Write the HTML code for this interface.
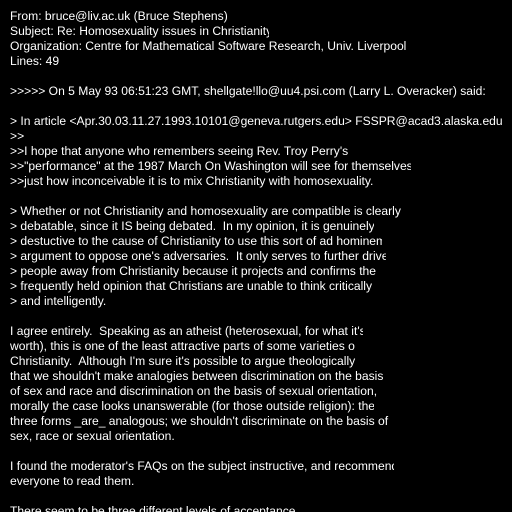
<!DOCTYPE html>
<html><head><meta charset="utf-8"><style>
html,body{margin:0;padding:0;background:#000;width:512px;height:512px;overflow:hidden}
body{font-family:"Liberation Sans",sans-serif;font-size:12.1px;line-height:15px;color:#fff;padding-top:9px;box-sizing:border-box}
div{margin-left:10px;white-space:pre;overflow:hidden;height:15px}
.b{height:15px}
</style></head><body>
<div>From: bruce@liv.ac.uk (Bruce Stephens)</div>
<div style="width:259px">Subject: Re: Homosexuality issues in Christianity</div>
<div>Organization: Centre for Mathematical Software Research, Univ. Liverpool</div>
<div>Lines: 49</div>
<div class="b"></div>
<div>&gt;&gt;&gt;&gt;&gt; On 5 May 93 06:51:23 GMT, shellgate!llo@uu4.psi.com (Larry L. Overacker) said:</div>
<div class="b"></div>
<div>&gt; In article &lt;Apr.30.03.11.27.1993.10101@geneva.rutgers.edu&gt; FSSPR@acad3.alaska.edu</div>
<div>&gt;&gt;</div>
<div style="width:401px">&gt;&gt;I hope that anyone who remembers seeing Rev. Troy Perry's</div>
<div style="width:401px">&gt;&gt;"performance" at the 1987 March On Washington will see for themselves</div>
<div style="width:401px">&gt;&gt;just how inconceivable it is to mix Christianity with homosexuality.</div>
<div class="b"></div>
<div style="width:393px">&gt; Whether or not Christianity and homosexuality are compatible is clearly</div>
<div style="width:364px">&gt; debatable, since it IS being debated.  In my opinion, it is genuinely</div>
<div style="width:372px">&gt; destuctive to the cause of Christianity to use this sort of ad hominem</div>
<div style="width:376px">&gt; argument to oppose one's adversaries.  It only serves to further drive</div>
<div style="width:366px">&gt; people away from Christianity because it projects and confirms the</div>
<div style="width:370px">&gt; frequently held opinion that Christians are unable to think critically</div>
<div>&gt; and intelligently.</div>
<div class="b"></div>
<div style="width:353px">I agree entirely.  Speaking as an atheist (heterosexual, for what it's</div>
<div style="width:345px">worth), this is one of the least attractive parts of some varieties of</div>
<div style="width:346px">Christianity.  Although I'm sure it's possible to argue theologically</div>
<div style="width:374px">that we shouldn't make analogies between discrimination on the basis</div>
<div style="width:368px">of sex and race and discrimination on the basis of sexual orientation,</div>
<div style="width:364px">morally the case looks unanswerable (for those outside religion): the</div>
<div style="width:379px">three forms _are_ analogous; we shouldn't discriminate on the basis of</div>
<div>sex, race or sexual orientation.</div>
<div class="b"></div>
<div style="width:384px">I found the moderator's FAQs on the subject instructive, and recommend</div>
<div>everyone to read them.</div>
<div class="b"></div>
<div>There seem to be three different levels of acceptance</div>
</body></html>
